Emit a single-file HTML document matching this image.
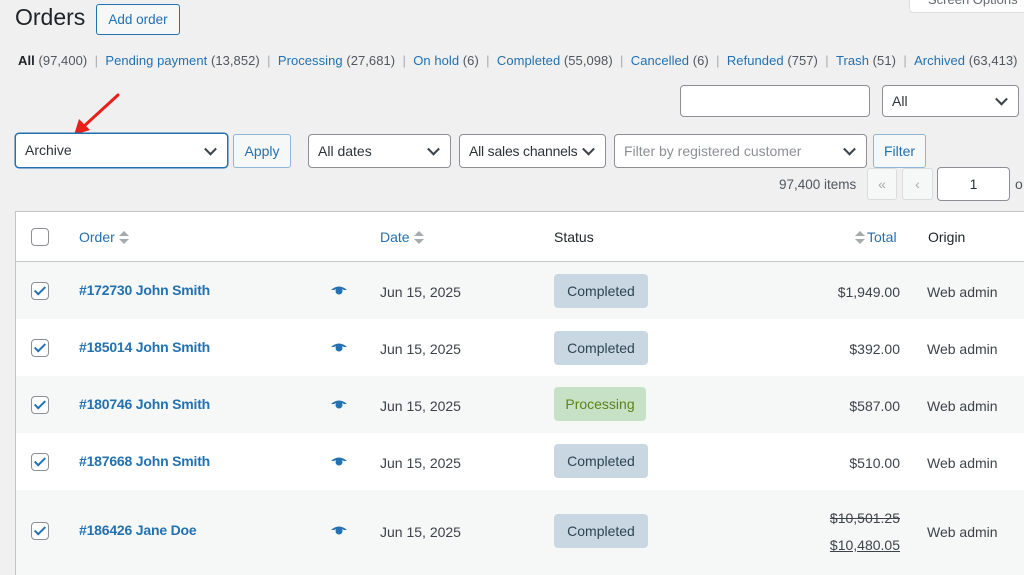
<!DOCTYPE html>
<html><head><style>
body{margin:0;width:1024px;height:575px;overflow:hidden;background:#f0f0f1;font-family:"Liberation Sans",sans-serif;color:#3c434a;position:relative;font-size:14px}
.a{position:absolute}
.lnk{color:#2271b1}
.btn{position:absolute;border:1px solid #2271b1;border-radius:3px;background:#f6f7f7;color:#2271b1;box-sizing:border-box;text-align:center}
.sel{position:absolute;border:1px solid #8c8f94;border-radius:4px;background:#fff;box-sizing:border-box;padding-left:9px;color:#2c3338}
.sel:after{content:"";position:absolute;right:12px;top:50%;width:7px;height:7px;border-right:2px solid #3c434a;border-bottom:2px solid #3c434a;transform:translateY(-70%) rotate(45deg)}
.row{position:absolute;left:15px;width:1009px}
.cb{position:absolute;left:15px;width:16px;height:16px;border:1px solid #8c8f94;border-radius:4px;background:#fff}
.cb.c:after{content:"";position:absolute;left:5px;top:1px;width:4px;height:9px;border-right:2px solid #2271b1;border-bottom:2px solid #2271b1;transform:rotate(45deg)}
.badge{position:absolute;left:538px;width:94px;height:34px;border-radius:4px;background:#c8d7e1;color:#2e4453;line-height:34px;text-align:center}
.badge.p{background:#c6e1c6;color:#5b841b;width:92px}
.sort{display:inline-block;width:0;height:14px;vertical-align:middle;position:relative;margin-left:4px}
.sort:before{content:"";position:absolute;left:0;top:0;border:5px solid transparent;border-bottom:5px solid #a7aaad;border-top:0}
.sort:after{content:"";position:absolute;left:0;top:8px;border:5px solid transparent;border-top:5px solid #a7aaad;border-bottom:0}
.eye{position:absolute;left:315px}
.ord{font-weight:bold;letter-spacing:-0.2px}
</style></head><body>
<div class="a" style="left:909px;top:-6px;width:120px;height:19px;background:#fff;border:1px solid #dcdcde;border-radius:4px;font-size:13px;color:#646970;line-height:10px;padding-left:18px;box-sizing:border-box">Screen Options</div>
<div class="a" style="left:15px;top:4px;font-size:23px;color:#1d2327">Orders</div>
<div class="btn" style="left:96px;top:4px;width:84px;height:31px;line-height:29px;font-size:13.5px">Add order</div>
<div class="a" style="left:18px;top:53px;font-size:13px;color:#a7aaad;white-space:nowrap;letter-spacing:0.05px"><b style="color:#1d2327;font-weight:600">All</b> <span style="color:#50575e">(97,400)</span> &nbsp;| &nbsp;<span class="lnk">Pending payment <span style="color:#50575e">(13,852)</span></span> &nbsp;| &nbsp;<span class="lnk">Processing <span style="color:#50575e">(27,681)</span></span> &nbsp;| &nbsp;<span class="lnk">On hold <span style="color:#50575e">(6)</span></span> &nbsp;| &nbsp;<span class="lnk">Completed <span style="color:#50575e">(55,098)</span></span> &nbsp;| &nbsp;<span class="lnk">Cancelled <span style="color:#50575e">(6)</span></span> &nbsp;| &nbsp;<span class="lnk">Refunded <span style="color:#50575e">(757)</span></span> &nbsp;| &nbsp;<span class="lnk">Trash <span style="color:#50575e">(51)</span></span> &nbsp;| &nbsp;<span class="lnk">Archived <span style="color:#50575e">(63,413)</span></span></div>
<div class="a" style="left:680px;top:85px;width:190px;height:32px;background:#fff;border:1px solid #8c8f94;border-radius:4px;box-sizing:border-box"></div>
<div class="sel" style="left:882px;top:85px;width:137px;height:32px;line-height:30px">All</div>
<svg class="a" style="left:70px;top:92px" width="52" height="46"><line x1="48" y1="3" x2="12" y2="36" stroke="#e8201a" stroke-width="3" stroke-linecap="round"/><polygon points="4,43 9,27 20,38" fill="#e8201a"/></svg>
<div class="sel" style="left:15px;top:133px;width:213px;height:35px;line-height:33px;border:1.5px solid #2271b1;box-shadow:0 0 0 0.5px #2271b1;color:#2c3338">Archive</div>
<div class="btn" style="left:233px;top:134px;width:58px;height:34px;line-height:32px;border-color:#8fb6d8;font-size:14px">Apply</div>
<div class="sel" style="left:308px;top:134px;width:143px;height:34px;line-height:32px">All dates</div>
<div class="sel" style="left:459px;top:134px;width:147px;height:34px;line-height:32px;letter-spacing:-0.2px">All sales channels</div>
<div class="sel" style="left:614px;top:134px;width:253px;height:34px;line-height:32px;color:#8c8f94">Filter by registered customer</div>
<div class="btn" style="left:873px;top:134px;width:53px;height:34px;line-height:32px;border-color:#8fb6d8">Filter</div>
<div class="a" style="left:779px;top:177px;color:#50575e;font-size:13.5px">97,400 items</div>
<div class="a" style="left:867px;top:168px;width:30px;height:32px;border:1px solid #dcdcde;border-radius:3px;background:#f6f7f7;color:#a7aaad;text-align:center;line-height:30px;box-sizing:border-box">«</div>
<div class="a" style="left:902px;top:168px;width:31px;height:32px;border:1px solid #dcdcde;border-radius:3px;background:#f6f7f7;color:#a7aaad;text-align:center;line-height:30px;box-sizing:border-box">‹</div>
<div class="a" style="left:937px;top:167px;width:73px;height:34px;border:1px solid #8c8f94;border-radius:4px;background:#fff;text-align:center;line-height:32px;box-sizing:border-box;color:#2c3338">1</div>
<div class="a" style="left:1015px;top:176px;color:#50575e">o</div>

<div class="row" style="top:211px;height:51px;background:#fff;border-top:1px solid #c3c4c7;border-left:1px solid #c3c4c7;border-bottom:1px solid #c3c4c7;box-sizing:border-box">
<div class="cb" style="top:16px"></div>
<div class="a lnk" style="left:63px;top:17px">Order<span class="sort"></span></div>
<div class="a lnk" style="left:364px;top:17px">Date<span class="sort"></span></div>
<div class="a" style="left:538px;top:17px;color:#1d2327">Status</div>
<div class="a lnk" style="left:839px;top:17px"><span class="sort" style="margin:0 12px 0 0"></span>Total</div>
<div class="a" style="left:912px;top:17px;color:#1d2327">Origin</div>
</div>

<div class="row" style="top:262px;height:57px;background:#f6f7f7;border-left:1px solid #c3c4c7;box-sizing:border-box">
<div class="cb c" style="top:20px"></div>
<div class="a lnk ord" style="left:63px;top:20px">#172730 John Smith</div>
<svg class="eye" style="top:24px" width="16" height="9"><path d="M0 4 Q8 -3 16 4 L13 4 Q8 1 3 4Z" fill="#2271b1"/><circle cx="8" cy="5" r="3.5" fill="#2271b1"/></svg>
<div class="a" style="left:364px;top:22px">Jun 15, 2025</div>
<div class="badge" style="top:12px">Completed</div>
<div class="a" style="right:124px;top:22px">$1,949.00</div>
<div class="a" style="left:911px;top:22px">Web admin</div>
</div>
<div class="row" style="top:319px;height:57px;background:#fff;border-left:1px solid #c3c4c7;box-sizing:border-box">
<div class="cb c" style="top:20px"></div>
<div class="a lnk ord" style="left:63px;top:20px">#185014 John Smith</div>
<svg class="eye" style="top:24px" width="16" height="9"><path d="M0 4 Q8 -3 16 4 L13 4 Q8 1 3 4Z" fill="#2271b1"/><circle cx="8" cy="5" r="3.5" fill="#2271b1"/></svg>
<div class="a" style="left:364px;top:22px">Jun 15, 2025</div>
<div class="badge" style="top:12px">Completed</div>
<div class="a" style="right:124px;top:22px">$392.00</div>
<div class="a" style="left:911px;top:22px">Web admin</div>
</div>
<div class="row" style="top:376px;height:57px;background:#f6f7f7;border-left:1px solid #c3c4c7;box-sizing:border-box">
<div class="cb c" style="top:20px"></div>
<div class="a lnk ord" style="left:63px;top:20px">#180746 John Smith</div>
<svg class="eye" style="top:24px" width="16" height="9"><path d="M0 4 Q8 -3 16 4 L13 4 Q8 1 3 4Z" fill="#2271b1"/><circle cx="8" cy="5" r="3.5" fill="#2271b1"/></svg>
<div class="a" style="left:364px;top:22px">Jun 15, 2025</div>
<div class="badge p" style="top:11px">Processing</div>
<div class="a" style="right:124px;top:22px">$587.00</div>
<div class="a" style="left:911px;top:22px">Web admin</div>
</div>
<div class="row" style="top:433px;height:57px;background:#fff;border-left:1px solid #c3c4c7;box-sizing:border-box">
<div class="cb c" style="top:20px"></div>
<div class="a lnk ord" style="left:63px;top:20px">#187668 John Smith</div>
<svg class="eye" style="top:24px" width="16" height="9"><path d="M0 4 Q8 -3 16 4 L13 4 Q8 1 3 4Z" fill="#2271b1"/><circle cx="8" cy="5" r="3.5" fill="#2271b1"/></svg>
<div class="a" style="left:364px;top:22px">Jun 15, 2025</div>
<div class="badge" style="top:11px">Completed</div>
<div class="a" style="right:124px;top:22px">$510.00</div>
<div class="a" style="left:911px;top:22px">Web admin</div>
</div>
<div class="row" style="top:490px;height:85px;background:#f6f7f7;border-left:1px solid #c3c4c7;box-sizing:border-box">
<div class="cb c" style="top:32px"></div>
<div class="a lnk ord" style="left:63px;top:32px">#186426 Jane Doe</div>
<svg class="eye" style="top:36px" width="16" height="9"><path d="M0 4 Q8 -3 16 4 L13 4 Q8 1 3 4Z" fill="#2271b1"/><circle cx="8" cy="5" r="3.5" fill="#2271b1"/></svg>
<div class="a" style="left:364px;top:34px">Jun 15, 2025</div>
<div class="badge" style="top:24px">Completed</div>
<div class="a" style="right:124px;top:20px;text-decoration:line-through">$10,501.25</div>
<div class="a" style="right:124px;top:47px;text-decoration:underline">$10,480.05</div>
<div class="a" style="left:911px;top:34px">Web admin</div>
</div>
</body></html>
